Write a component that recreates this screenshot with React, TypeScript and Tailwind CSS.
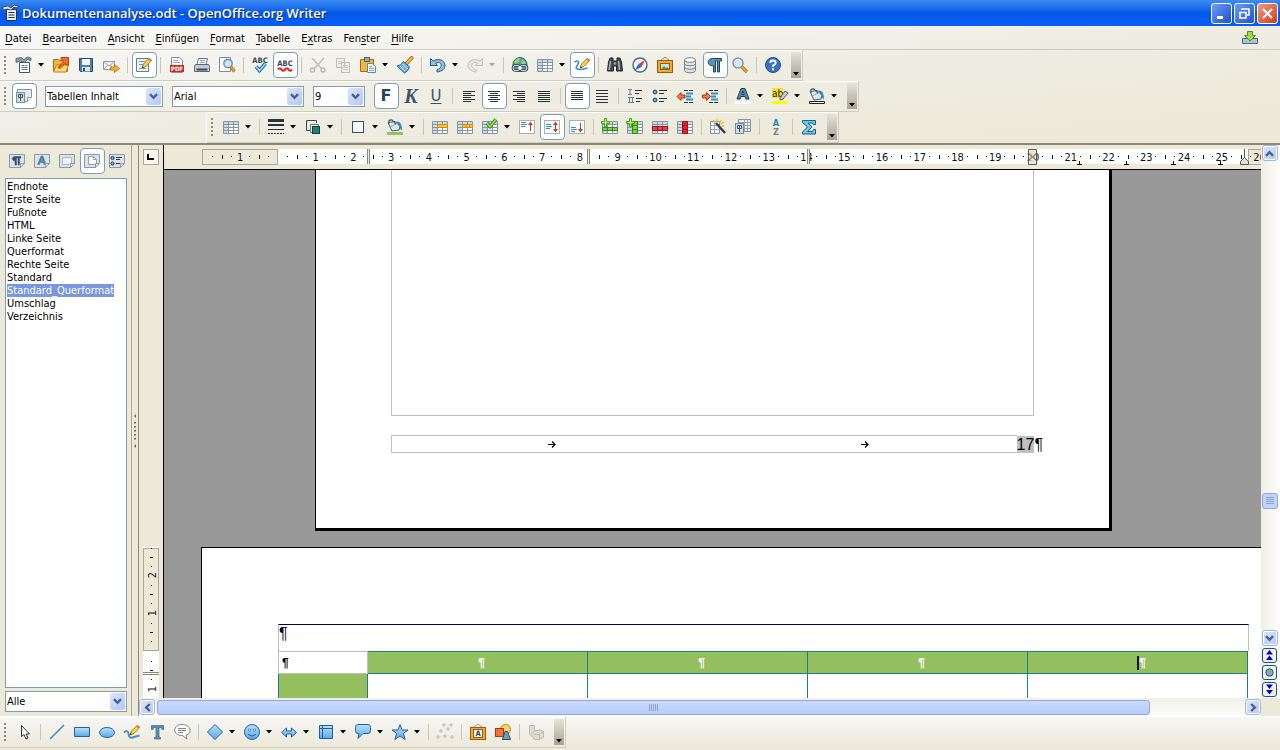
import React from "react";

type Kids = { children?: React.ReactNode };

/* ---------- building blocks ---------- */

function Svg({ children }: Kids) {
  return (
    <svg width="18" height="18" viewBox="0 0 18 18" fill="none" aria-hidden="true" className="shrink-0">
      {children}
    </svg>
  );
}

function Tool({ label, active, children }: Kids & { label: string; active?: boolean }) {
  return (
    <button
      type="button"
      aria-label={label}
      aria-pressed={active}
      className={
        "flex h-[26px] w-[25px] shrink-0 items-center justify-center rounded-[4px] border pr-px " +
        (active ? "border-[#7f9db9] bg-white" : "border-transparent")
      }
    >
      {children}
    </button>
  );
}

function Drop({ label, muted }: { label: string; muted?: boolean }) {
  return (
    <button type="button" aria-label={label} className="flex h-[26px] w-3 shrink-0 items-center pl-px">
      <svg width="6" height="4" viewBox="0 0 6 4" aria-hidden="true">
        <path d="M0 0h6L3 3.5z" fill={muted ? "#a9a89c" : "#000"} />
      </svg>
    </button>
  );
}

function Sep() {
  return (
    <span className="flex h-4 w-2 shrink-0 pl-[3px]">
      <span className="w-px bg-[#c9c6b6]" />
    </span>
  );
}

function Grip() {
  return (
    <span className="flex w-3 shrink-0 pl-1">
      <svg width="3" height="19" aria-hidden="true">
        <path d="M1 0v19" stroke="#8d8a7c" strokeWidth="2" strokeDasharray="2 2" />
      </svg>
    </span>
  );
}

function Overflow() {
  return (
    <button
      type="button"
      aria-label="Weitere Symbole"
      className="my-0.5 mr-px ml-[5px] flex w-[10px] shrink-0 items-end justify-center self-stretch bg-linear-to-b from-[#e6e4da] to-[#a6a396] pb-0.5"
    >
      <svg width="6" height="4" viewBox="0 0 6 4" aria-hidden="true">
        <path d="M0 0h6L3 3.5z" fill="#000" />
      </svg>
    </button>
  );
}

function Bar({ children, label }: Kids & { label: string }) {
  return (
    <div
      role="toolbar"
      aria-label={label}
      className="flex h-[31px] w-fit items-center border-r border-b border-[#cfccbc] shadow-[inset_0_1px_0_#fff]"
    >
      {children}
    </div>
  );
}

function Chevron() {
  return (
    <svg width="9" height="7" viewBox="0 0 9 7" fill="none" aria-hidden="true">
      <path d="M1 1.2l3.5 3.6L8 1.2" stroke="#4d6185" strokeWidth="2.4" />
    </svg>
  );
}

function Combo({ label, value, options, className }: { label: string; value: string; options: string[]; className: string }) {
  return (
    <div className={"relative flex shrink-0 " + className}>
      <select
        aria-label={label}
        defaultValue={value}
        className="h-[21px] w-full appearance-none border border-[#7f9db9] bg-white pr-4 pl-px text-[11px] leading-[19px] text-black"
      >
        {options.map((o) => (
          <option key={o}>{o}</option>
        ))}
      </select>
      <span className="pointer-events-none absolute top-0.5 right-0.5 bottom-0.5 flex w-[15px] items-center justify-center rounded-xs bg-linear-to-br from-[#dbe5fe] to-[#b3c6f5]">
        <Chevron />
      </span>
    </div>
  );
}

function ScrollButton({ label, turn }: { label: string; turn: string }) {
  return (
    <button
      type="button"
      aria-label={label}
      className="flex h-4 w-4 shrink-0 items-center justify-center rounded-[3px] border border-[#9fb5e6] bg-linear-to-br from-[#dbe5fe] to-[#b5c8f8] shadow-[inset_0_0_0_1px_#fff]"
    >
      <span className={turn}>
        <Chevron />
      </span>
    </button>
  );
}

/* ---------- icons ---------- */

function TableGrid({ children }: Kids) {
  return (
    <Svg>
      <path d="M1.500 3.500h15v12h-15z" fill="#fff" />
      <path d="M2 4h14v2H2zM2 6h4v9H2z" fill="#cfd9e3" />
      <path d="M1.500 3.500h15v12h-15zM1.500 6.500h15M1.500 9.500h15M1.500 12.500h15M6.500 3.500v12M11.500 3.500v12" stroke="#8594a6" />
      {children}
    </Svg>
  );
}

const NewDoc = () => (
  <Svg>
    <path d="M4.500 6.500h10v10h-10z" fill="#fff" stroke="#3f5563" />
    <path d="M1 2.500l5-1 3 2 3-2.500 4 1v2.500l-4-1-2 3-5-1.500-4 1.500z" fill="#8ea2af" stroke="#3f5563" strokeWidth=".8" />
    <path d="M6.500 9.500h3M6.500 11.500h6M6.500 13.500h6M10.500 9.500h2" stroke="#5d7483" />
  </Svg>
);
const Folder = () => (
  <Svg>
    <path d="M1.500 15.500v-12h5l1 1h8v11z" fill="#f3b63c" stroke="#b06f0e" />
    <path d="M1.500 16l3-7h12l-2.500 7z" fill="#fcdb72" stroke="#c07f14" />
    <path d="M6 11.500l5.500-5.500-2.500-2.500V1.500h7.500V9H14.500l-1.500-1.500-5 5z" fill="#ee6b2f" stroke="#a83610" strokeWidth=".9" />
  </Svg>
);
const Floppy = () => (
  <Svg>
    <path d="M2.500 2.500h13v13h-12l-1-1z" fill="#4f7fa6" stroke="#244a68" />
    <path d="M5 3h8v6H5z" fill="#eff6fb" />
    <path d="M5 11h8v4.500H5z" fill="#dbe6ee" />
    <path d="M6 12h2v3H6z" fill="#244a68" />
  </Svg>
);
const Mail = () => (
  <Svg>
    <path d="M1.500 5.500h11v8h-11z" fill="#f7f8f9" stroke="#8a9aa6" />
    <path d="M2 6l5 4 5-4M2 13l4-4M12 13L8 9" stroke="#9aa8b3" />
    <path d="M8.500 11h4V8.500l5 4-5 4V14h-4z" fill="#f7b13a" stroke="#b8720e" strokeWidth=".9" />
  </Svg>
);
const PencilShape = () => (
  <>
    <path d="M7 12l1.500-4L14 2.500l2.500 2L11 10.500z" fill="#f8d548" stroke="#8a6410" strokeWidth=".8" />
    <path d="M13 3.500l1.500-1.500 2.500 2-1.500 1.500z" fill="#e66a6a" />
    <path d="M7 12l.6-2 1.400 1.200z" fill="#333" />
  </>
);
const EditDoc = () => (
  <Svg>
    <path d="M1.500 2.500h12v13h-12z" fill="#e7f0f6" stroke="#5f7f95" />
    <path d="M4 5.500h6M4 8.500h4M4 12.500h7" stroke="#7b98ab" />
    <PencilShape />
  </Svg>
);
const Pdf = () => (
  <Svg>
    <path d="M3.500 1.500h8l3 3v12h-11z" fill="#f5f7f9" stroke="#8193a3" />
    <path d="M5 4.500h5M5 6.500h7" stroke="#9fb0bf" />
    <rect x="2" y="9" width="14" height="7" fill="#d02b20" />
    <text x="9" y="15" textAnchor="middle" fontSize="6" fontWeight="700" fill="#fff">PDF</text>
  </Svg>
);
const Printer = () => (
  <Svg>
    <path d="M5.500 2.500h9l-1.500 6H4z" fill="#fff" stroke="#5d7689" />
    <path d="M7 4.500h5M6.500 6.500h5" stroke="#7fa6c4" />
    <path d="M2.500 8.500h13l1 2v5h-15v-5z" fill="#c3ccd3" stroke="#596a77" />
    <path d="M3.500 12.500h11v2h-11z" fill="#3e4c57" />
  </Svg>
);
const Preview = () => (
  <Svg>
    <path d="M1.500 1.500h11v14h-11z" fill="#fff" stroke="#7b8e9d" />
    <circle cx="10" cy="7.500" r="4.200" fill="#c9e5f8" stroke="#6287a3" strokeWidth="1.300" />
    <path d="M13 11l3.500 4.500" stroke="#9e610d" strokeWidth="3" />
    <path d="M13 11l3.500 4.500" stroke="#eea93a" strokeWidth="1.500" />
  </Svg>
);
const Spell = ({ auto }: { auto?: boolean }) => (
  <Svg>
    <text x="9" y={auto ? 10 : 7} textAnchor="middle" fontSize="7.500" fontWeight="700" fill="#33474f">ABC</text>
    {auto ? (
      <path d="M2 13.500q2-2.500 3.500 0t3.500 0 3.500 0 3.500 0" stroke="#da2a1b" strokeWidth="2.200" />
    ) : (
      <>
        <path d="M5 10.500l3.500 4 6-7" stroke="#1f6f9f" strokeWidth="3.600" />
        <path d="M5 10.500l3.500 4 6-7" stroke="#9bd8f6" strokeWidth="1.600" />
      </>
    )}
  </Svg>
);
const Cut = () => (
  <Svg>
    <path d="M3 2l10 11M15 2L5 13" stroke="#c0bfb5" strokeWidth="1.600" />
    <circle cx="3.500" cy="14" r="2" stroke="#b9b8af" strokeWidth="1.400" />
    <circle cx="14" cy="14" r="2" stroke="#b9b8af" strokeWidth="1.400" />
  </Svg>
);
const Copy = () => (
  <Svg>
    <path d="M2.500 2.500h8v9h-8zM7.500 6.500h8v10h-8z" fill="#f0efe8" stroke="#bdbcb2" />
    <path d="M4 5.500h4M4 7.500h3M9 9.500h5M9 11.500h5M9 13.500h5" stroke="#c6c5bb" />
  </Svg>
);
const Paste = () => (
  <Svg>
    <path d="M1.500 3.500h13v12h-13z" fill="#f2b63e" stroke="#a9690d" />
    <rect x="5.500" y="1.500" width="5" height="4" fill="#9aa7b0" stroke="#56636c" />
    <path d="M8.500 7.500h5l3 3v6h-8z" fill="#f4f9fc" stroke="#6484a0" />
    <path d="M10 10.500h3M10 12.500h5M10 14.500h5" stroke="#8daac1" />
  </Svg>
);
const Brush = () => (
  <Svg>
    <path d="M10.500 7.500L15.500 2" stroke="#a9690d" strokeWidth="3.800" strokeLinecap="round" />
    <path d="M10.500 7.500L15.500 2" stroke="#f5bc44" strokeWidth="2" strokeLinecap="round" />
    <path d="M7.500 5.500l6 5.500q-1 4-5 6l-7.500-7q4 0 6.500-4.500z" fill="#6fb1e2" stroke="#24608f" />
    <path d="M4 10l5 5M6.500 8l5 5" stroke="#d2ebfa" />
  </Svg>
);
const Undo = ({ redo }: { redo?: boolean }) => (
  <Svg>
    <g transform={redo ? "translate(18 0) scale(-1 1)" : undefined}>
      <path
        d="M1.500 2.500v7h7L6.500 7c4-1.500 6.500 .5 5.500 3.500-.5 1.500-1.500 2.500-4 3v2.500c5-.5 8.500-3.500 8-7C15.500 4 9.500 2 4 5z"
        fill={redo ? "#e9e8e0" : "#8fc0e4"}
        stroke={redo ? "#c0bfb5" : "#275e88"}
      />
    </g>
  </Svg>
);
const Globe = () => (
  <Svg>
    <circle cx="9" cy="8.500" r="7" fill="#4f9cc4" stroke="#33694f" />
    <path d="M3 6q2-4 6-4l-1 4-4 2zM11 3l4 4-3 3-2-3z" fill="#a2d15f" />
    <rect x="2" y="9.500" width="7" height="5" rx="2.500" fill="#4f9cc4" stroke="#2b3d47" strokeWidth="2.600" />
    <rect x="9" y="9.500" width="7" height="5" rx="2.500" fill="#4f9cc4" stroke="#2b3d47" strokeWidth="2.600" />
    <rect x="2" y="9.500" width="7" height="5" rx="2.500" stroke="#fff" />
    <rect x="9" y="9.500" width="7" height="5" rx="2.500" stroke="#fff" />
    <path d="M7 12h4" stroke="#fff" strokeWidth="1.500" />
  </Svg>
);
const Draw = () => (
  <Svg>
    <path d="M1.500 6c3-2 5-1 3.500 2s-3 4-.5 5 7 0 10-1" stroke="#3f8fca" strokeWidth="1.600" />
    <PencilShape />
  </Svg>
);
const Binoculars = () => (
  <Svg>
    <path d="M4 2h3v3h4V2h3l1.500 4 1 9h-6v-5h-3v5h-6l1-9z" fill="#424b52" stroke="#20272b" />
    <path d="M4.500 5l-1.500 9M12.500 5l1 9" stroke="#aab3b9" strokeWidth="1.500" />
    <circle cx="9" cy="7.500" r="1.300" fill="#9aa3aa" />
  </Svg>
);
const Compass = () => (
  <Svg>
    <circle cx="9" cy="9" r="7" fill="#e9f2f9" stroke="#4d6980" strokeWidth="1.400" />
    <path d="M14 4L7.500 8l3 3z" fill="#dd3a2a" />
    <path d="M4 14l3.500-6 3 3z" fill="#2867b5" />
  </Svg>
);
const Gallery = () => (
  <Svg>
    <path d="M5 4l4-3 4 3" stroke="#8a8a7c" />
    <rect x="1.500" y="4.500" width="15" height="12" fill="#f2a92f" stroke="#9e5a09" />
    <rect x="4.500" y="7.500" width="9" height="6" fill="#bfe3f5" stroke="#9e5a09" />
    <path d="M5 13l3-3 2 2 1.500-1 1.500 2z" fill="#5f9f2f" />
  </Svg>
);
const Database = () => (
  <Svg>
    <path d="M3.500 4v10.500c0 3 11 3 11 0V4" fill="#dfe2e4" stroke="#7b848b" />
    <ellipse cx="9" cy="4" rx="5.500" ry="2.300" fill="#f8f9fa" stroke="#7b848b" />
    <path d="M3.500 7.500c0 3 11 3 11 0M3.500 11c0 3 11 3 11 0" stroke="#7b848b" />
  </Svg>
);
const Pilcrow = () => (
  <Svg>
    <path d="M15.500 2.500h-9c-6 0-6 7.500 1 7.500v6h2V5h2v11h2V5h2z" fill="#5f8fb3" stroke="#1f4460" />
  </Svg>
);
const Zoom = () => (
  <Svg>
    <circle cx="7" cy="7" r="5" fill="#d3eafa" stroke="#7e97aa" strokeWidth="1.500" />
    <path d="M11 11l5 5" stroke="#a9690d" strokeWidth="3.200" />
    <path d="M11 11l5 5" stroke="#f3b13d" strokeWidth="1.600" />
  </Svg>
);
const Help = () => (
  <Svg>
    <circle cx="9" cy="9" r="7.500" fill="#3b74c4" stroke="#1e4b92" />
    <path d="M6.300 7q0-2.500 2.700-2.500T11.700 7Q11.700 8.300 9 9.600V11" stroke="#fff" strokeWidth="1.900" />
    <path d="M8 12.300h2v2H8z" fill="#fff" />
  </Svg>
);
const StyleIcon = () => (
  <Svg>
    <path d="M2.500 2.500h14v8l-4 4h-10z" fill="#e6ecf0" stroke="#8796a2" />
    <path d="M12.500 14.500v-4h4" fill="#fff" stroke="#8796a2" />
    <rect x="1.500" y="5.500" width="8" height="10" fill="#cfdbe4" stroke="#7d90a0" />
    <path d="M5.500 8v6M3.500 7.500h4v3h-4z" stroke="#44576a" />
  </Svg>
);

type LineSpec = [number, number, number][];
const Lines = ({ rows }: { rows: LineSpec }) => (
  <Svg>
    {rows.map(([x, y, w], i) => (
      <path key={i} d={`M${x} ${y}h${w}`} stroke="#27333a" />
    ))}
  </Svg>
);
const alignLeft: LineSpec = [[3, 4.5, 12], [3, 6.5, 8], [3, 8.5, 12], [3, 10.5, 8], [3, 12.5, 12], [3, 14.5, 8]];
const alignCenter: LineSpec = [[3, 4.5, 12], [5, 6.5, 8], [3, 8.5, 12], [5, 10.5, 8], [3, 12.5, 12], [5, 14.5, 8]];
const alignRight: LineSpec = [[3, 4.5, 12], [7, 6.5, 8], [3, 8.5, 12], [7, 10.5, 8], [3, 12.5, 12], [7, 14.5, 8]];
const justify: LineSpec = [[3, 4.5, 12], [3, 6.5, 12], [3, 8.5, 12], [3, 10.5, 12], [3, 12.5, 12], [3, 14.5, 12]];
const spacing1: LineSpec = [[3, 4.5, 12], [3, 6.5, 12], [3, 8.5, 12], [3, 10.5, 12], [3, 12.5, 12]];
const spacing15: LineSpec = [[3, 3.5, 12], [3, 6.5, 12], [3, 9.5, 12], [3, 12.5, 12], [3, 15.5, 12]];

const Numbering = () => (
  <Svg>
    <path d="M2 2.500h4M4 3v4M2 7.500h4M2 10.500h6M3.500 11v4M6.500 11v4M2 15.500h6" stroke="#5d8199" />
    <path d="M9 3.500h7M9 6.500h4M10 11.500h6M10 14.500h4" stroke="#27333a" />
  </Svg>
);
const Bullets = () => (
  <Svg>
    <circle cx="4" cy="5" r="1.900" fill="#7fb1cf" stroke="#1e3f55" />
    <circle cx="4" cy="13" r="1.900" fill="#7fb1cf" stroke="#1e3f55" />
    <path d="M8 3.500h8M8 6.500h5M8 11.500h8M8 14.500h5" stroke="#27333a" />
  </Svg>
);
const Indent = ({ increase }: { increase?: boolean }) => (
  <Svg>
    <path d="M8 3.500h9M8 15.500h9" stroke="#27333a" strokeDasharray="4 1" />
    <path d="M10 6.500h7M10 9.500h5M10 12.500h7" stroke="#3391bd" strokeWidth="2" />
    <path
      d={increase ? "M9.500 9.500l-4-4V8h-4v3h4v2.500z" : "M1 9.500l4-4V8h4v3H5v2.500z"}
      fill="#ef7a4b"
      stroke="#b3330f"
    />
  </Svg>
);
const FontColor = () => (
  <Svg>
    <path d="M3 12L7 1.500h4L15 12h-3l-1-2.500H7L6 12zM7.700 7.500h2.600L9 4z" fill="#5d88a8" stroke="#1e3e55" />
    <path d="M1 14h16v3H1z" fill="#fff" />
  </Svg>
);
const Highlight = () => (
  <Svg>
    <path d="M1 1h11v10H1z" fill="#f7e32b" />
    <text x="1" y="9.500" fontSize="10" fill="#222">ab</text>
    <path d="M9 11l5-7 3 2-5 6-3 1z" fill="#c9cdd0" stroke="#596168" />
    <path d="M1 14h16v3H1z" fill="#ffff00" />
  </Svg>
);
const Bucket = ({ color, outline }: { color: string; outline?: string }) => (
  <Svg>
    <path d="M2 4.500l4 8.500 7-1 1-4-5-4.500z" fill="#dfe7ec" stroke="#45606f" />
    <path d="M4 9l8-4" stroke="#8ea5b2" />
    <path d="M3 6q-1-5 3-4l4 4" stroke="#45606f" strokeWidth="1.300" />
    <path d="M10 3.500q6-1 6 9-2-1-2.500-4z" fill="#2f88b5" />
    <path d="M1.500 14.500h15v2h-15z" fill={color} stroke={outline ?? color} />
  </Svg>
);
const Borders = () => (
  <Svg>
    <path d="M1 2.500h16" stroke="#27333a" strokeWidth="3" />
    <path d="M1 7h16" stroke="#27333a" strokeWidth="2" />
    <path d="M1 11.500h16" stroke="#27333a" />
    <path d="M1 15.500h16" stroke="#27333a" strokeDasharray="2 1" />
  </Svg>
);
const LineColor = () => (
  <Svg>
    <path d="M12.500 5v-2.500h-10v10H7" stroke="#3a4950" />
    <path d="M8 14.500H6.500v-8h8V8" stroke="#6b7b82" />
    <rect x="8.500" y="8.500" width="7" height="7" fill="#178080" stroke="#1c3a3a" />
  </Svg>
);
const Frame = () => (
  <Svg>
    <rect x="3.500" y="3.500" width="11" height="11" fill="#f4f7fa" stroke="#3e4f5a" />
  </Svg>
);
const VAlign = ({ kind }: { kind: "top" | "mid" | "bottom" }) => (
  <Svg>
    <rect x="1.500" y="2.500" width="15" height="13" fill="#fff" stroke="#a7b0b8" />
    {kind === "top" && <path d="M3 4.500h5M3 6.500h6M3 8.500h4" stroke="#3f8fbe" />}
    {kind === "mid" && <path d="M3 6.500h5M3 8.500h6M3 10.500h4" stroke="#3f8fbe" />}
    {kind === "bottom" && <path d="M3 9.500h5M3 11.500h6M3 13.500h4" stroke="#3f8fbe" />}
    {kind !== "bottom" && <path d="M10 7l2.500-3.500L15 7z" fill="#cb3a1c" />}
    {kind !== "top" && <path d="M10 11l2.500 3.500L15 11z" fill="#cb3a1c" />}
    <path d="M12.500 5v8" stroke="#cb3a1c" />
  </Svg>
);
const Plus = () => (
  <path d="M3.500 .5h2v3h3v2h-3v3h-2v-3h-3v-2h3z" fill="#c6f08a" stroke="#3f9f1c" />
);
const Wand = () => (
  <Svg>
    <path d="M1.500 3.500h9v12h-9z" fill="#f4f7fa" stroke="#8293a5" />
    <path d="M1.500 7.500h9M1.500 11.500h9M5.500 3.500v12" stroke="#9aa9b8" />
    <path d="M7 5l9 10" stroke="#323c42" strokeWidth="2.500" />
    <path d="M8 1v3M12 2l-1 3M15 4l-3 2M4 2l2 2M15 8h-2" stroke="#eebb1e" strokeWidth="1.300" />
  </Svg>
);
const TableProps = () => (
  <Svg>
    <path d="M4.500 1.500h12v12h-12z" fill="#eef2f5" stroke="#8293a5" />
    <path d="M10.500 1.500v12M13.500 1.500v12M4.500 4.500h12M10.500 7.500h6M10.500 10.500h6" stroke="#93a3b3" />
    <rect x="1.500" y="5.500" width="8" height="10" fill="#d3dde5" stroke="#71869a" />
    <path d="M5.500 8v6M3.500 7.500h4v3h-4z" stroke="#3c5167" />
  </Svg>
);
const Sort = () => (
  <Svg>
    <text x="9" y="8" textAnchor="middle" fontSize="9" fontWeight="700" fill="#2389bd">A</text>
    <text x="9" y="17" textAnchor="middle" fontSize="9" fontWeight="700" fill="#76838b">Z</text>
  </Svg>
);
const Sum = () => (
  <Svg>
    <path d="M2.500 2.500h13v4h-2l-1-1.500H8l4 4-4.500 4.500H12.500l1-2h2v4.500h-13v-2L7.500 9l-5-4.500z" fill="#6fc4ea" stroke="#14638e" />
  </Svg>
);

const SideIcon = ({ children }: Kids) => (
  <Svg>
    <path d="M1.500 2.500h15v9l-4 4h-11z" fill="#dbe3ea" stroke="#8a9aa8" />
    {children}
    <path d="M12.500 15.500v-4h4z" fill="#fff" stroke="#8a9aa8" />
  </Svg>
);

const blueLine = "#23609b";
const BlueDefs = () => (
  <svg width="0" height="0" className="absolute" aria-hidden="true">
    <defs>
      <linearGradient id="blue" x1="0" y1="0" x2="0" y2="1">
        <stop offset="0" stopColor="#b9e0fb" />
        <stop offset="1" stopColor="#5aa9e8" />
      </linearGradient>
    </defs>
  </svg>
);
const Cursor = () => (
  <Svg>
    <path d="M6.500 2.500v11l2.500-2 2 4.500 2-1-2-4h3.500z" fill="#fff" stroke="#2c3439" />
  </Svg>
);
const BlueShape = ({ d }: { d: string }) => (
  <Svg>
    <path d={d} fill="url(#blue)" stroke={blueLine} strokeLinejoin="round" />
  </Svg>
);
const Smiley = () => (
  <Svg>
    <circle cx="9" cy="9" r="7.500" fill="url(#blue)" stroke={blueLine} />
    <circle cx="6.500" cy="7" r="1.200" fill="#fff" stroke={blueLine} strokeWidth=".7" />
    <circle cx="11.500" cy="7" r="1.200" fill="#fff" stroke={blueLine} strokeWidth=".7" />
    <path d="M5 11q4 4 8 0" stroke={blueLine} />
  </Svg>
);
const Flow = () => (
  <Svg>
    <path d="M2.500 2.500h13v13h-13z" fill="url(#blue)" stroke={blueLine} />
    <path d="M5.500 3v12M3 5.500h12" stroke={blueLine} />
  </Svg>
);
const TextIcon = () => (
  <Svg>
    <path d="M3.500 2.500h12v4h-1.500l-1-2h-2V14l1.500 .5V16H6.500v-1.500L8 14V4.500H6l-1 2H3.500z" fill="#5f8cab" stroke="#4a718d" strokeWidth=".8" />
  </Svg>
);
const Callout = () => (
  <Svg>
    <path d="M9 1.500c10 0 10 10 4 10.500l1 4-4.500-3.500C-.5 13-1 1.500 9 1.500z" fill="#fbfbfb" stroke="#83888b" />
    <path d="M5 5.500h8M5 7.500h8M5 9.500h5" stroke="#83888b" />
  </Svg>
);
const Points = () => (
  <Svg>
    {[[8, 2], [15, 2], [5, 8], [12, 6], [2, 14], [9, 13], [16, 14]].map(([x, y]) => (
      <circle key={`${x}-${y}`} cx={x} cy={y} r="1.200" fill="#eceadf" stroke="#bab8ab" />
    ))}
  </Svg>
);
const Fontwork = () => (
  <Svg>
    <path d="M5 4l4-3 4 3" stroke="#9a9a8c" />
    <rect x="1.500" y="4.500" width="15" height="12" fill="#f2a92f" stroke="#9e5a09" />
    <rect x="4.500" y="6.500" width="9" height="8" fill="#fff" stroke="#9e5a09" />
    <text x="9" y="13" textAnchor="middle" fontSize="7.500" fontWeight="700" fill="#23435a">A</text>
  </Svg>
);
const Shapes = () => (
  <Svg>
    <circle cx="11.500" cy="6.500" r="5" fill="#f9d66b" stroke="#b9811a" />
    <rect x="1.500" y="5.500" width="8" height="8" fill="#f2703a" stroke="#a63a0d" />
    <path d="M8.500 16.500l2.500-8h2.500l3 8z" fill="#6e9cb8" stroke="#2c5068" />
  </Svg>
);
const Extrude = () => (
  <Svg>
    <path d="M2.500 2.500h5v5h5v-1l4 2v6l-4 2h-5l-2-3-3-2z" fill="#dddbd0" stroke="#bcbaad" />
    <path d="M7.500 7.500l-2 3M7.500 11.500h5l4-3M12.500 11.500v5" stroke="#bcbaad" />
  </Svg>
);

/* ---------- data ---------- */

const menu: [string, string, string][] = [
  ["", "D", "atei"],
  ["", "B", "earbeiten"],
  ["", "A", "nsicht"],
  ["", "E", "infügen"],
  ["", "F", "ormat"],
  ["", "T", "abelle"],
  ["E", "x", "tras"],
  ["Fen", "s", "ter"],
  ["", "H", "ilfe"],
];

const styles = [
  "Endnote",
  "Erste Seite",
  "Fußnote",
  "HTML",
  "Linke Seite",
  "Querformat",
  "Rechte Seite",
  "Standard",
  "Standard_Querformat",
  "Umschlag",
  "Verzeichnis",
];

/* ---------- rulers ---------- */

const CM = 37.75;

function HorizontalRuler() {
  const zero = 114;
  const marks: React.ReactNode[] = [];
  for (let i = -1; i <= 26; i++) {
    const x = zero + i * CM;
    if (i !== 0) {
      marks.push(
        <text key={`n${i}`} x={x} y="12" textAnchor="middle" fontSize="11" fill="#111">
          {Math.abs(i)}
        </text>
      );
    }
    if (i === -1) {
      marks.push(<path key="lead" d="M48 7.500h1M58.500 6v4M67 7.500h1" stroke="#111" />);
    }
    const m = Math.round(x);
    marks.push(<path key={`t${i}`} d={`M${m + 9} 7.500h1M${m + 19.5} 6v4M${m + 28} 7.500h1`} stroke="#111" />);
  }
  return (
    <svg className="block h-[18px] w-full" aria-label="Lineal">
      <rect x="38" y="0" width="1060" height="15" fill="#fff" />
      <rect x="38.500" y=".5" width="75" height="15" fill="#ece9d8" stroke="#aca899" />
      <rect x="1084.500" y=".5" width="40" height="15" fill="#ece9d8" stroke="#aca899" />
      {marks}
      {[204, 424, 644].map((x) => (
        <g key={x}>
          <rect x={x - 1} y="0" width="3" height="15" fill="#ece9d8" />
          <path d={`M${x - 0.5} 0v15M${x + 1.5} 0v15`} stroke="#8b8878" />
        </g>
      ))}
      {[915, 962, 1009, 1056].map((x) => (
        <path key={x} d={`M${x - 2} 15.500h5M${x + 0.5} 12v3`} stroke="#111" />
      ))}
      <path d="M864.500 .5h8v15h-8z" fill="#e3e0cf" fillOpacity=".8" stroke="#5d5b50" />
      <path d="M864.500 4.500l4 3.500 4-3.500M864.500 11.500l4-3.500 4 3.500" stroke="#5d5b50" fill="none" />
      <path d="M1080.500 0v9M1076.500 15.500v-3l4-4 4 4v3z" fill="#e3e0cf" stroke="#5d5b50" />
    </svg>
  );
}

function VerticalRuler() {
  return (
    <svg className="mx-auto block h-full w-4" aria-label="Vertikales Lineal">
      <rect x="0" y="378" width="16" height="151" fill="#fff" />
      <rect x=".5" y="379.500" width="15" height="102" fill="#ece9d8" stroke="#aca899" />
      {[
        [406, "2"],
        [444, "1"],
        [520, "1"],
      ].map(([y, t]) => (
        <text key={y} transform={`translate(13 ${y}) rotate(-90)`} textAnchor="middle" fontSize="11" fill="#111">
          {t}
        </text>
      ))}
      {[388, 425, 463, 501].map((y) => (
        <path key={y} d={`M7 ${y + 0.5}h3M8 ${y + 9.5}h1M8 ${y - 8.5}h1`} stroke="#111" />
      ))}
      <path d="M0 503.500h16M0 505.500h16" stroke="#8b8878" />
    </svg>
  );
}

/* ---------- window ---------- */

function TitleButton({ label, close, children }: Kids & { label: string; close?: boolean }) {
  return (
    <button
      type="button"
      aria-label={label}
      className={
        "flex size-[21px] items-center justify-center rounded-[3px] border border-white bg-linear-to-br " +
        (close ? "from-[#ee9a80] to-[#cc3b12]" : "from-[#6f9bf6] to-[#1f4fd0]")
      }
    >
      <svg width="13" height="13" viewBox="0 0 13 13" fill="none" stroke="#fff" strokeWidth="2" aria-hidden="true">
        {children}
      </svg>
    </button>
  );
}

function NavButton({ label, children }: Kids & { label: string }) {
  return (
    <button
      type="button"
      aria-label={label}
      className="flex size-[15px] shrink-0 items-center justify-center rounded-[3px] border border-[#1c5180] bg-[#f3f2ea]"
    >
      <svg width="11" height="11" viewBox="0 0 11 11" fill="#0000d8" aria-hidden="true" className="shrink-0">
        {children}
      </svg>
    </button>
  );
}

const headCell = "border border-[#1f8080] bg-[#94bf5f] pl-2 text-center font-bold text-white";
const cell = "border border-[#1f8080] bg-white";

export default function App() {
  return (
    <div className="flex h-screen flex-col overflow-hidden bg-[#ece9d8] font-['DejaVu_Sans_Condensed','Noto_Sans',sans-serif] text-[11px] leading-[13px] text-black">
      <BlueDefs />
      <header className="flex h-[26px] shrink-0 items-center bg-linear-to-b from-[#3c8cf5] via-[#0457e6] to-[#0560fb] pr-0.5 pl-0.5">
        <svg width="17" height="18" viewBox="0 0 17 18" fill="none" aria-hidden="true">
          <path d="M4.500 5.500h10v11h-10z" fill="#e8eef2" stroke="#28333a" />
          <path d="M1 3l5-1 3 2 3-3 4 1v2l-4-1-3 3-4-1-4 1z" fill="#dfe7ec" stroke="#28333a" strokeWidth=".7" />
          <path d="M6.500 8.500h6M6.500 11h6M6.500 13.500h6" stroke="#28333a" />
        </svg>
        <h1 className="ml-[3px] flex-1 font-['Open_Sans','Noto_Sans',sans-serif] text-[13px] leading-[18px] font-semibold text-white [text-shadow:1px_1px_0_#0a2a80]">
          Dokumentenanalyse.odt - OpenOffice.org Writer
        </h1>
        <div className="flex gap-0.5">
          <TitleButton label="Minimieren">
            <path d="M2 10.500h6" strokeWidth="3" />
          </TitleButton>
          <TitleButton label="Wiederherstellen">
            <path d="M4 3V2h7v6h-2" strokeWidth="1.600" />
            <path d="M2 5.500h6v5.500H2z" strokeWidth="1.600" />
          </TitleButton>
          <TitleButton label="Schließen" close>
            <path d="M2 2l9 9M11 2l-9 9" />
          </TitleButton>
        </div>
      </header>

      <div className="shrink-0 border-b-2 border-[#8b887a] bg-linear-to-br from-[#f8f8f9] via-[#efede2] to-[#ebe8d7]">
        <nav className="flex h-6 items-center border-b border-[#cfccbc] pt-px pr-[21px] pl-[5px]">
          <ul className="flex flex-1 gap-[11px]">
            {menu.map(([a, b, c]) => (
              <li key={a + b + c}>
                <button type="button">
                  {a}
                  <span className="underline underline-offset-2">{b}</span>
                  {c}
                </button>
              </li>
            ))}
          </ul>
          <button type="button" aria-label="Updates verfügbar">
            <Svg>
              <path d="M1.500 9.500h15v5h-15z" fill="#a9c3d4" stroke="#4d6a7d" />
              <path d="M6.500 2.500h5v4h3L9 12 3.500 6.500h3z" fill="#a5d84e" stroke="#4e8f17" />
            </Svg>
          </button>
        </nav>

        <Bar label="Standard">
          <Grip />
          <Tool label="Neu"><NewDoc /></Tool>
          <Drop label="Neu Optionen" />
          <Tool label="Öffnen"><Folder /></Tool>
          <Tool label="Speichern"><Floppy /></Tool>
          <Tool label="Als E-Mail senden"><Mail /></Tool>
          <Sep />
          <Tool label="Datei bearbeiten" active><EditDoc /></Tool>
          <Sep />
          <Tool label="Als PDF exportieren"><Pdf /></Tool>
          <Tool label="Drucken"><Printer /></Tool>
          <Tool label="Seitenansicht"><Preview /></Tool>
          <Sep />
          <Tool label="Rechtschreibung"><Spell /></Tool>
          <Tool label="Automatische Rechtschreibprüfung" active><Spell auto /></Tool>
          <Sep />
          <Tool label="Ausschneiden"><Cut /></Tool>
          <Tool label="Kopieren"><Copy /></Tool>
          <Tool label="Einfügen"><Paste /></Tool>
          <Drop label="Einfügen Optionen" />
          <Tool label="Format übertragen"><Brush /></Tool>
          <Sep />
          <Tool label="Rückgängig"><Undo /></Tool>
          <Drop label="Rückgängig Optionen" />
          <Tool label="Wiederherstellen"><Undo redo /></Tool>
          <Drop label="Wiederherstellen Optionen" muted />
          <Sep />
          <Tool label="Hyperlink"><Globe /></Tool>
          <Tool label="Tabelle"><TableGrid /></Tool>
          <Drop label="Tabelle Optionen" />
          <Tool label="Zeichnungsfunktionen" active><Draw /></Tool>
          <Sep />
          <Tool label="Suchen"><Binoculars /></Tool>
          <Tool label="Navigator"><Compass /></Tool>
          <Tool label="Gallery"><Gallery /></Tool>
          <Tool label="Datenquellen"><Database /></Tool>
          <Tool label="Steuerzeichen" active><Pilcrow /></Tool>
          <Tool label="Maßstab"><Zoom /></Tool>
          <Sep />
          <Tool label="Hilfe"><Help /></Tool>
          <Overflow />
        </Bar>

        <Bar label="Format">
          <Grip />
          <Tool label="Formatvorlagen" active><StyleIcon /></Tool>
          <Combo label="Vorlage" value="Tabellen Inhalt" options={["Tabellen Inhalt", "Standard"]} className="ml-2 w-[118px]" />
          <Combo label="Schriftart" value="Arial" options={["Arial", "Times New Roman"]} className="mx-[9px] w-[132px]" />
          <Combo label="Schriftgröße" value="9" options={["9", "10", "12"]} className="mr-[9px] w-[52px]" />
          <Tool label="Fett" active>
            <span className="font-['DejaVu_Sans',sans-serif] text-[16px] leading-5 font-bold text-[#27435a]">F</span>
          </Tool>
          <Tool label="Kursiv">
            <span className="font-['Liberation_Serif',serif] text-[20px] leading-5 font-bold text-[#3d5566] italic">K</span>
          </Tool>
          <Tool label="Unterstrichen">
            <span className="font-['DejaVu_Sans',sans-serif] text-[15px] leading-5 text-[#3d5566] underline underline-offset-2">U</span>
          </Tool>
          <Sep />
          <Tool label="Linksbündig"><Lines rows={alignLeft} /></Tool>
          <Tool label="Zentriert" active><Lines rows={alignCenter} /></Tool>
          <Tool label="Rechtsbündig"><Lines rows={alignRight} /></Tool>
          <Tool label="Blocksatz"><Lines rows={justify} /></Tool>
          <Sep />
          <Tool label="Zeilenabstand 1" active><Lines rows={spacing1} /></Tool>
          <Tool label="Zeilenabstand 1,5"><Lines rows={spacing15} /></Tool>
          <Sep />
          <Tool label="Nummerierung"><Numbering /></Tool>
          <Tool label="Aufzählung"><Bullets /></Tool>
          <Tool label="Einzug vermindern"><Indent /></Tool>
          <Tool label="Einzug erhöhen"><Indent increase /></Tool>
          <Sep />
          <Tool label="Zeichenfarbe"><FontColor /></Tool>
          <Drop label="Zeichenfarbe Optionen" />
          <Tool label="Hervorheben"><Highlight /></Tool>
          <Drop label="Hervorheben Optionen" />
          <Tool label="Hintergrundfarbe"><Bucket color="#fff" outline="#222" /></Tool>
          <Drop label="Hintergrundfarbe Optionen" />
          <Overflow />
        </Bar>

        <div className="pl-[206px]">
          <div className="w-fit border-l border-white">
            <Bar label="Tabelle">
              <Grip />
              <Tool label="Tabelle einfügen"><TableGrid /></Tool>
              <Drop label="Tabelle einfügen Optionen" />
              <Sep />
              <Tool label="Linienstil"><Borders /></Tool>
              <Drop label="Linienstil Optionen" />
              <Tool label="Linienfarbe"><LineColor /></Tool>
              <Drop label="Linienfarbe Optionen" />
              <Sep />
              <Tool label="Umrandung"><Frame /></Tool>
              <Drop label="Umrandung Optionen" />
              <Tool label="Hintergrund"><Bucket color="#94bf5f" /></Tool>
              <Drop label="Hintergrund Optionen" />
              <Sep />
              <Tool label="Zellen verbinden">
                <TableGrid><path d="M6.500 6.500h10v3h-10z" fill="#fcc53f" stroke="#d98a12" /></TableGrid>
              </Tool>
              <Tool label="Zellen teilen">
                <TableGrid><path d="M6.500 6.500h10v3h-10zM10 6.500v3M13.500 6.500v3" fill="#fcc53f" stroke="#d98a12" /></TableGrid>
              </Tool>
              <Tool label="Optimieren">
                <TableGrid><path d="M6 5l3 3.500L15 1.500" stroke="#3f8f1c" strokeWidth="3.600" /><path d="M6 5l3 3.500L15 1.500" stroke="#9fdc54" strokeWidth="1.600" /></TableGrid>
              </Tool>
              <Drop label="Optimieren Optionen" />
              <Tool label="Oben"><VAlign kind="top" /></Tool>
              <Tool label="Mitte" active><VAlign kind="mid" /></Tool>
              <Tool label="Unten"><VAlign kind="bottom" /></Tool>
              <Sep />
              <Tool label="Zeile einfügen">
                <TableGrid><path d="M1.500 9.500h15v3h-15zM6.500 9.500v3M11.500 9.500v3" fill="#7fd33c" stroke="#2f8a17" /><Plus /></TableGrid>
              </Tool>
              <Tool label="Spalte einfügen">
                <TableGrid><path d="M6.500 3.500h5v12h-5zM6.500 7.500h5M6.500 11.500h5" fill="#7fd33c" stroke="#2f8a17" /><Plus /></TableGrid>
              </Tool>
              <Tool label="Zeile löschen">
                <TableGrid><path d="M1.500 8.500h15v4h-15zM6.500 8.500v4M11.500 8.500v4" fill="#e8404a" stroke="#a81018" /></TableGrid>
              </Tool>
              <Tool label="Spalte löschen">
                <TableGrid><path d="M6.500 3.500h5v12h-5zM6.500 7.500h5M6.500 11.500h5" fill="#e8202a" stroke="#a81018" /></TableGrid>
              </Tool>
              <Sep />
              <Tool label="AutoFormat"><Wand /></Tool>
              <Tool label="Tabelleneigenschaften"><TableProps /></Tool>
              <Sep />
              <Tool label="Sortieren"><Sort /></Tool>
              <Sep />
              <Tool label="Summe"><Sum /></Tool>
              <Overflow />
            </Bar>
          </div>
        </div>
      </div>

      <main className="flex min-h-0 flex-1">
        <aside className="flex w-[132px] shrink-0 flex-col border-r border-[#aca899] pr-1 pb-1 pl-[5px]">
          <div className="flex h-[33px] shrink-0 items-center pb-px">
            <Tool label="Absatzvorlagen">
              <SideIcon><path d="M13 4.500H7C3.500 4.500 3.500 9 7 9v4h1.500V6H10v7h1.500V6H13z" fill="#35536b" stroke="#35536b" strokeWidth=".5" /></SideIcon>
            </Tool>
            <Tool label="Zeichenvorlagen">
              <SideIcon><path d="M4.500 12.500L8 4h2l3 8.500h-2l-.8-2H7.300l-.8 2zM8 9h1.800L9 6.500z" fill="#4f7ea3" stroke="#4f7ea3" strokeWidth=".5" /></SideIcon>
            </Tool>
            <Tool label="Rahmenvorlagen">
              <SideIcon><path d="M4.500 5.500h9v7h-9z" fill="#eef3f7" stroke="#a9b9c6" /></SideIcon>
            </Tool>
            <Tool label="Seitenvorlagen" active>
              <SideIcon><path d="M5.500 4.500h5l3 3v5h-8z" fill="#fff" stroke="#93a3b1" /><path d="M10.500 4.500v3h3" stroke="#93a3b1" /></SideIcon>
            </Tool>
            <Tool label="Listenvorlagen">
              <SideIcon>
                <circle cx="4.500" cy="6" r="1.600" fill="#7fb1cf" stroke="#1e3f55" />
                <circle cx="4.500" cy="11.500" r="1.600" fill="#7fb1cf" stroke="#1e3f55" />
                <path d="M8 5.500h6M8 7.500h4M8 11.500h4" stroke="#27333a" />
              </SideIcon>
            </Tool>
          </div>
          <ul className="min-h-0 flex-1 overflow-hidden border border-[#7f9db9] bg-white px-px py-px">
            {styles.map((s) => (
              <li key={s} className="h-[13px]">
                <button
                  type="button"
                  className={"block h-[13px] " + (s === "Standard_Querformat" ? "bg-[#7a96df] text-white" : "")}
                >
                  {s}
                </button>
              </li>
            ))}
          </ul>
          <div className="mt-[3px] flex">
            <Combo label="Filter" value="Alle" options={["Alle", "Automatisch"]} className="w-full" />
          </div>
        </aside>

        <div className="flex w-1.5 shrink-0 items-center justify-center" aria-hidden="true">
          <svg width="4" height="36" viewBox="0 0 4 36" fill="#6d6a5c">
            <path d="M3 1v4L1 3zM3 31v4L1 33z" />
            <path d="M1 9h2v1.500H1zM1 13h2v1.500H1zM1 17h2v1.500H1zM1 21h2v1.500H1zM1 25h2v1.500H1z" />
          </svg>
        </div>

        <section className="flex min-w-0 flex-1 flex-col border-l border-[#8b887a]" aria-label="Dokument">
          <div className="flex min-h-0 flex-1">
            <div className="flex w-[25px] shrink-0 flex-col border-r border-black">
              <div className="flex h-6 shrink-0 items-center justify-center">
                <button type="button" aria-label="Tabulatortyp" className="flex size-4 items-center justify-center border border-[#aca899] bg-[#f8f7f0]">
                  <svg width="8" height="8" fill="none" aria-hidden="true">
                    <path d="M1 1v5h6" stroke="#000" strokeWidth="2" />
                  </svg>
                </button>
              </div>
              <div className="min-h-0 flex-1 pr-1 pl-1">
                <VerticalRuler />
              </div>
            </div>

            <div className="flex min-w-0 flex-1 flex-col">
              <div className="h-6 shrink-0 pt-1">
                <HorizontalRuler />
              </div>
              <div className="min-h-0 flex-1 overflow-hidden border-t border-black bg-[#999999] font-['Liberation_Sans',sans-serif]">
                <article className="ml-[151px] flex h-[361px] w-[797px] flex-col border-r-[3px] border-b-[3px] border-l border-black bg-white pl-[75px]">
                  <div className="h-[246px] w-[643px] border border-t-0 border-[#c0c0c0]" />
                  <div className="mt-[19px] flex h-[18px] w-[652px] items-center text-[16px] leading-[17px]">
                    <div className="flex h-[18px] flex-1 items-center border border-r-0 border-[#c0c0c0] pl-[155px]">
                      <svg width="324" height="9" fill="none" stroke="#000" aria-hidden="true">
                        <path d="M1 4.500h7M5 1.500l3 3-3 3M314 4.500h7M318 1.500l3 3-3 3" strokeWidth="1.200" />
                      </svg>
                    </div>
                    <span className="bg-[#c0c0c0]">17</span>
                    <span>¶</span>
                  </div>
                </article>
                <article className="mt-4 ml-[37px] h-[400px] w-[1124px] border border-black bg-white pt-[76px] pl-[76px]">
                  <div className="h-[27px] w-[971px] border border-t-[#000060] border-r-[#c0c0c0] border-b-0 border-l-[#c0c0c0] text-[16px] leading-[17px]">¶</div>
                  <table className="w-[970px] table-fixed border-collapse text-[12px] leading-4">
                    <colgroup>
                      <col className="w-[89px]" />
                      <col />
                      <col />
                      <col />
                      <col />
                    </colgroup>
                    <tbody>
                      <tr className="h-[22px]">
                        <td className="border border-[#c0c0c0] pl-[3px] font-bold">¶</td>
                        <td className={headCell}>¶</td>
                        <td className={headCell}>¶</td>
                        <td className={headCell}>¶</td>
                        <td className={headCell}>
                          <span className="border-l-2 border-[#201040]">¶</span>
                        </td>
                      </tr>
                      <tr className="h-[60px]">
                        <td className={headCell} />
                        <td className={cell} />
                        <td className={cell} />
                        <td className={cell} />
                        <td className={cell} />
                      </tr>
                    </tbody>
                  </table>
                </article>
              </div>
            </div>

            <div className="flex w-[19px] shrink-0 flex-col items-center gap-0.5 bg-linear-to-r from-[#f0efe6] to-[#fdfdfb] pr-0.5 pb-px">
              <ScrollButton label="Nach oben" turn="rotate-180" />
              <div className="flex-[343]" />
              <div className="flex size-4 shrink-0 items-center justify-center rounded-[3px] border border-[#8fa9e0] bg-[#c3d4fc]">
                <svg width="8" height="8" stroke="#8ba3dd" aria-hidden="true">
                  <path d="M0 .5h8M0 2.500h8M0 4.500h8M0 6.500h8" />
                </svg>
              </div>
              <div className="flex-[123]" />
              <ScrollButton label="Nach unten" turn="rotate-0" />
              <NavButton label="Vorherige Seite">
                <path d="M5.500 0L9 4.500H2zM5.500 5.500L9 10H2z" />
              </NavButton>
              <NavButton label="Navigation">
                <circle cx="5.500" cy="5.500" r="3.700" fill="#84a9bf" stroke="#2d5772" />
              </NavButton>
              <NavButton label="Nächste Seite">
                <path d="M5.500 5L9 .5H2zM5.500 10.500L9 6H2z" />
              </NavButton>
            </div>
          </div>

          <div className="flex h-[18px] shrink-0 pr-[19px]">
            <div className="flex flex-1 items-center gap-0.5 bg-linear-to-b from-[#f0efe6] to-[#fdfdfb]">
              <ScrollButton label="Nach links" turn="rotate-90" />
              <div className="flex h-[15px] flex-[994] items-center justify-center rounded-[3px] border border-[#8fa9e0] bg-linear-to-b from-[#cbdafd] to-[#b8ccfa]">
                <svg width="9" height="7" stroke="#8ba3dd" aria-hidden="true">
                  <path d="M.5 0v7M2.500 0v7M4.500 0v7M6.500 0v7M8.500 0v7" />
                </svg>
              </div>
              <div className="flex-[91]" />
              <ScrollButton label="Nach rechts" turn="-rotate-90" />
            </div>
          </div>
        </section>
      </main>

      <footer className="shrink-0 border-t border-white bg-linear-to-b from-[#f6f6f4] to-[#ebe8d8]">
        <Bar label="Zeichnen">
          <Grip />
          <Tool label="Auswahl"><Cursor /></Tool>
          <Sep />
          <Tool label="Linie">
            <Svg><path d="M2 16L16 2" stroke="#3f86c4" strokeWidth="1.400" /></Svg>
          </Tool>
          <Tool label="Rechteck"><BlueShape d="M1.500 4.500h15v9h-15z" /></Tool>
          <Tool label="Ellipse"><BlueShape d="M1.500 9.500a7.500 5 0 1 0 15 0a7.500 5 0 1 0-15 0z" /></Tool>
          <Tool label="Freihandlinie">
            <Svg>
              <path d="M1 9.500c2-2 4-2 4.500 1s1 5 4 4 4-1 7-2" stroke="#4a8fc9" strokeWidth="2" />
              <PencilShape />
            </Svg>
          </Tool>
          <Tool label="Text"><TextIcon /></Tool>
          <Tool label="Legende"><Callout /></Tool>
          <Sep />
          <Tool label="Standardformen"><BlueShape d="M9 1.500L16.500 9 9 16.500 1.500 9z" /></Tool>
          <Drop label="Standardformen Optionen" />
          <Tool label="Symbolformen"><Smiley /></Tool>
          <Drop label="Symbolformen Optionen" />
          <Tool label="Blockpfeile"><BlueShape d="M1.500 9.500l5-4.500v3h5V5l5 4.500-5 4.500v-3h-5v3z" /></Tool>
          <Drop label="Blockpfeile Optionen" />
          <Tool label="Flussdiagramme"><Flow /></Tool>
          <Drop label="Flussdiagramme Optionen" />
          <Tool label="Legenden"><BlueShape d="M4 1.500h10q2.500 0 2.500 3v3q0 3-2.500 3h-5L4 15.500l1-5H4q-2.500 0-2.500-3v-3q0-3 2.500-3z" /></Tool>
          <Drop label="Legenden Optionen" />
          <Tool label="Sterne"><BlueShape d="M9 1.500l2 5.500h6l-4.700 3.500 1.900 6L9 13l-5.200 3.500 1.900-6L1 7h6z" /></Tool>
          <Drop label="Sterne Optionen" />
          <Sep />
          <Tool label="Punkte"><Points /></Tool>
          <Sep />
          <Tool label="Fontwork"><Fontwork /></Tool>
          <Tool label="Aus Datei"><Shapes /></Tool>
          <Sep />
          <Tool label="Extrusion"><Extrude /></Tool>
          <Overflow />
        </Bar>
        <div className="h-0.5 bg-[#ece9d8]" />
      </footer>
    </div>
  );
}
